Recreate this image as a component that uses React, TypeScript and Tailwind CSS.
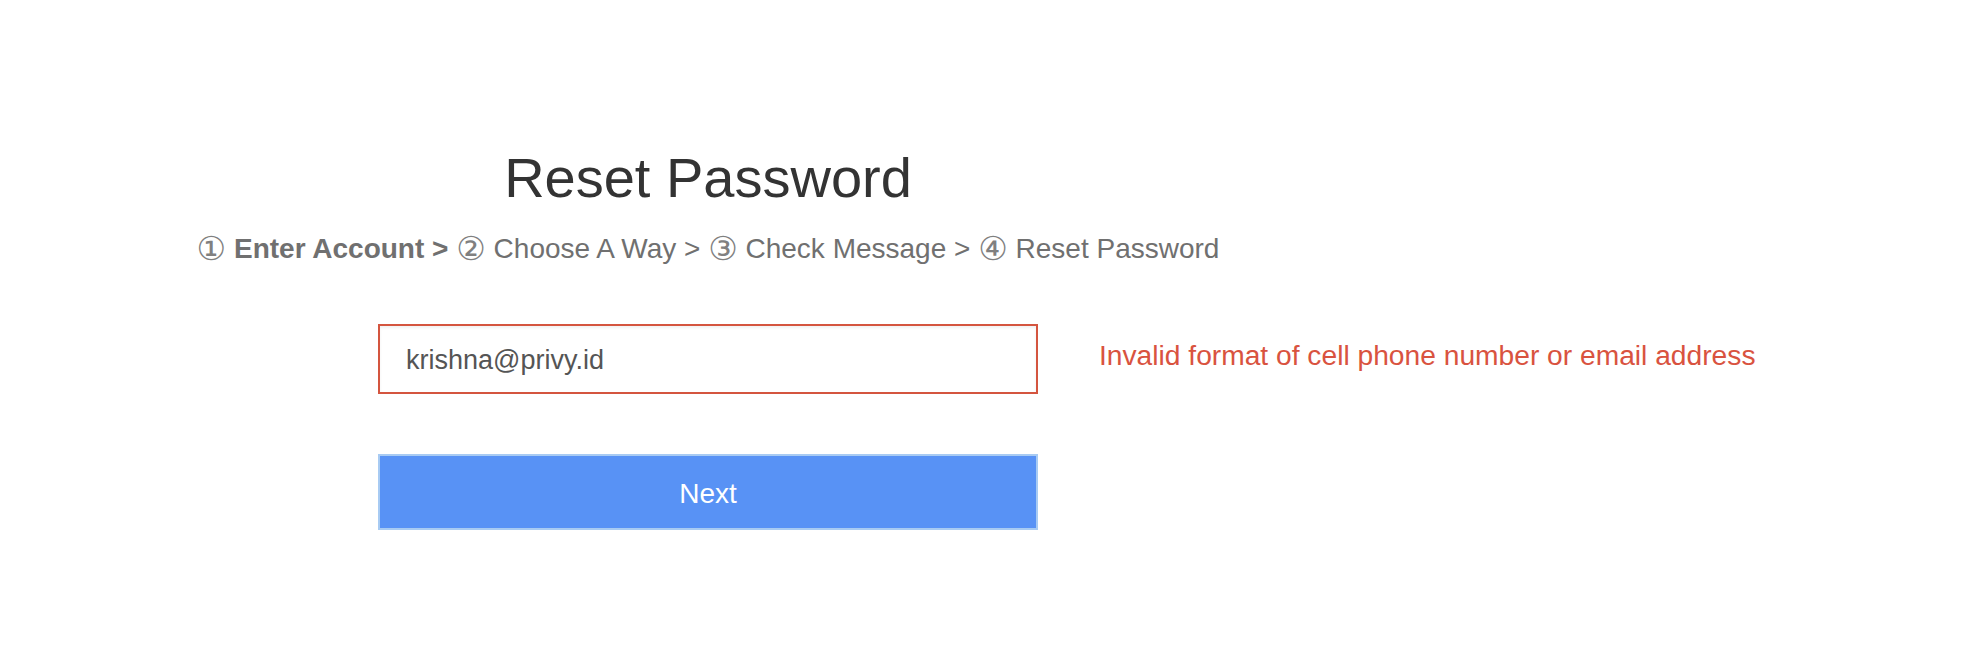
import { useState } from "react";

const font = { fontFamily: '"Liberation Sans", "DejaVu Sans", Arial, sans-serif' };

const Num = ({ c }: { c: string }) => (
  <span className="text-[33px] leading-none align-[-2px] text-[#808080]" style={{ fontFamily: '"DejaVu Sans", sans-serif' }}>{c}</span>
);

export default function App() {
  const [account, setAccount] = useState("krishna@privy.id");

  return (
    <div className="min-h-[672px] w-full bg-white pt-[146px] pl-[378px]" style={font}>
      {/* title + steps */}
      <div className="w-[660px] flex flex-col">
        <h1 className="text-center text-[56px] leading-[64px] text-[#333333] font-normal">Reset Password</h1>
        <div className="mt-[21px] h-[36px] flex justify-center whitespace-nowrap text-[28px] leading-[36px] text-[#707070]">
          <span>
            <Num c="①" /> <b className="font-bold">Enter Account &gt;</b> <Num c="②" /> Choose A Way &gt; <Num c="③" /> Check Message &gt; <Num c="④" /> Reset Password
          </span>
        </div>
      </div>

      {/* account row */}
      <div className="mt-[57px] flex items-start">
        <input
          value={account}
          onChange={(e) => setAccount(e.target.value)}
          className="w-[660px] h-[70px] border-2 border-[#d4553f] bg-white pl-[26px] pt-[2px] text-[27px] text-[#555555] outline-none shadow-[inset_0_2px_3px_rgba(0,0,0,0.06)]"
          style={font}
        />
        <p className="ml-[61px] mt-[13px] text-[28.2px] leading-[36px] text-[#d9533f] whitespace-nowrap">
          Invalid format of cell phone number or email address
        </p>
      </div>

      <button
        className="mt-[60px] w-[660px] h-[76px] border-2 border-[#a8cbf3] bg-[#5892f5] pt-[4px] text-white text-[28px]"
        style={font}
      >
        Next
      </button>
    </div>
  );
}
